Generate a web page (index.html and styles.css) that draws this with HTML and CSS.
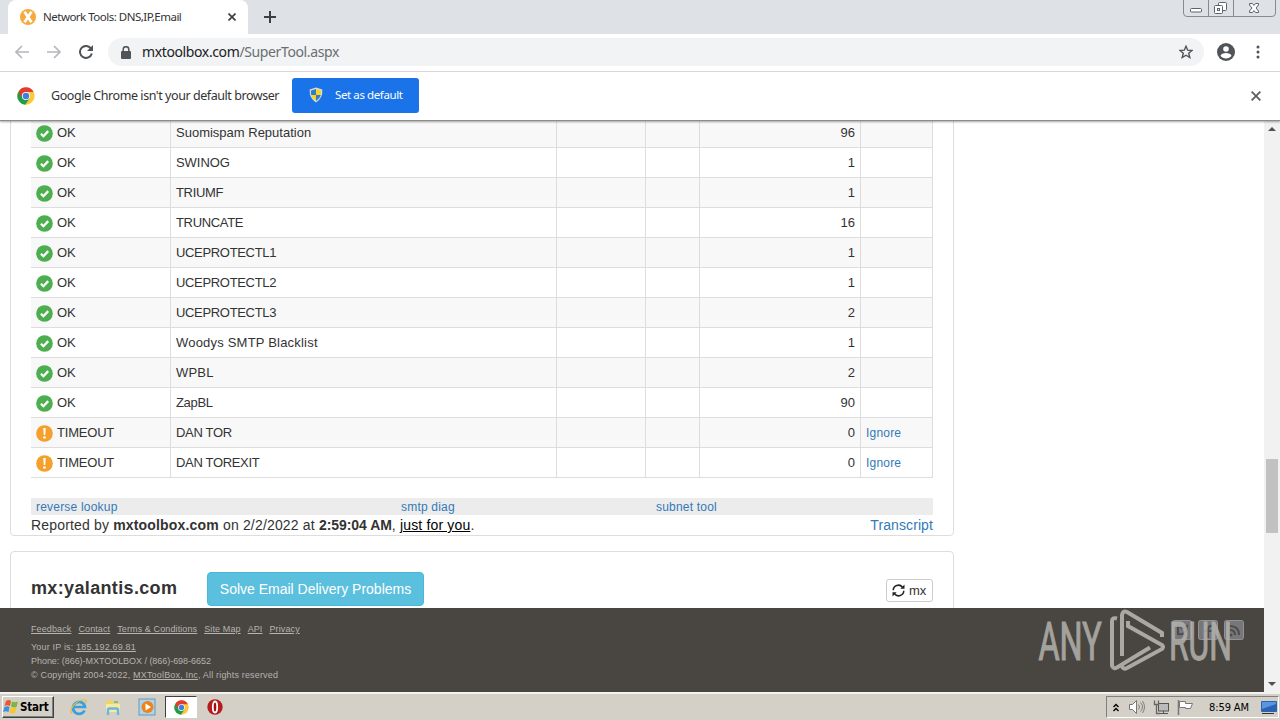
FILE: index.html
```html
<!DOCTYPE html>
<html lang="en">
<head>
<meta charset="utf-8">
<title>Network Tools: DNS,IP,Email</title>
<link rel="stylesheet" href="styles.css">
</head>

<body>

<!-- shared icons -->
<svg width="0" height="0" class="defs">
<symbol id="ok" viewBox="0 0 18 18"><circle cx="9" cy="9" r="8.8" fill="#4cae4f"/><path d="M5.2 9.2l2.7 2.7 5-5.4" fill="none" stroke="#fff" stroke-width="2.4"/></symbol>
<symbol id="warn" viewBox="0 0 18 18"><circle cx="9" cy="9" r="8.8" fill="#f5a02c"/><path d="M7.7 3.3h2.6l-.5 7.4H8.2z" fill="#fff"/><circle cx="9" cy="13.2" r="1.4" fill="#fff"/></symbol>
<symbol id="chrome" viewBox="0 0 24 24">
<circle cx="12" cy="12" r="11.5" fill="#fcc934"/>
<path d="M12 12L2 6.200A11.500 11.500 0 0 0 11 23.500L17 15z" fill="#1e9e4a"/>
<path d="M2 6.200A11.500 11.500 0 0 1 22.200 6.700H12L7 14.500z" fill="#e33b2e"/>
<circle cx="12" cy="12" r="5.400" fill="#fff"/><circle cx="12" cy="12" r="4.300" fill="#3f7fe0"/></symbol>
</svg>

<div class="tabstrip">
<div class="tab">
<svg width="16" height="16" viewBox="0 0 16 16"><circle cx="8" cy="8" r="8" fill="#f7a93b"/><path d="M4.500 2.800l7 10.400M11.500 2.800l-7 10.400" fill="none" stroke="#fff" stroke-width="2.800"/></svg>
<span class="tab-title">Network Tools: DNS,IP,Email</span>
<svg width="8" height="8" viewBox="0 0 8 8"><path d="M.5.5l7 7M7.5.5l-7 7" stroke="#3c4043" stroke-width="1.7"/></svg>
</div>
<svg class="plus" width="12" height="12" viewBox="0 0 12 12"><path d="M6 0v12M0 6h12" stroke="#3c4043" stroke-width="2"/></svg>
<svg class="winbuttons" width="94" height="18" viewBox="0 0 94 18">
<path d="M.5 0v13q0 3.5 3.5 3.5h85q3.5 0 3.5-3.5V0M25.5 0v16M50.500 0v16" fill="none" stroke="#858a96"/>
<g fill="#fff" stroke="#5c6370"><rect x="7.500" y="8.500" width="11" height="3.500" rx="1"/>
<rect x="35.500" y="2.500" width="8" height="8" rx="1"/><rect x="31.500" y="5.500" width="8" height="8" rx="1"/><rect x="34.500" y="8.500" width="2" height="2"/>
<path d="M66.500 3.500h3l1.500 2 1.500-2h3v1.500l-2.500 3 2.500 3v1.500h-3l-1.500-2-1.500 2h-3V11l2.500-3-2.500-3z"/></g>
</svg>
</div>

<div class="toolbar">
<svg width="14" height="14" viewBox="0 0 14 14"><path d="M14 7H1.500M7 1L1 7l6 6" fill="none" stroke="#b4b7bb" stroke-width="1.700"/></svg>
<svg width="14" height="14" viewBox="0 0 14 14"><path d="M0 7h12.500M7 1l6 6-6 6" fill="none" stroke="#b4b7bb" stroke-width="1.700"/></svg>
<svg width="14" height="14" viewBox="0 0 14 14"><path d="M12 3.600A6 6 0 1 0 12.800 8.500" fill="none" stroke="#4f5357" stroke-width="2"/><path d="M14 0v6H8z" fill="#4f5357"/></svg>
<div class="omnibox">
<svg width="10" height="13" viewBox="0 0 10 13"><rect y="5" width="10" height="8" rx="1" fill="#505458"/><path d="M2.200 5.500V3.500a2.800 2.800 0 0 1 5.600 0v2" fill="none" stroke="#505458" stroke-width="1.500"/></svg>
<span class="url">mxtoolbox.com<span class="path">/SuperTool.aspx</span></span>
<svg width="14" height="14" viewBox="0 0 14 14"><path d="M7 1.200l1.700 4 4.300.3-3.300 2.800 1.100 4.200L7 10.200l-3.800 2.300 1.100-4.200L1 5.500l4.300-.3z" fill="none" stroke="#505458" stroke-width="1.400"/></svg>
</div>
<svg class="avatar" width="18" height="18" viewBox="0 0 18 18"><circle cx="9" cy="9" r="9" fill="#505357"/><circle cx="9" cy="6" r="2.800" fill="#fff"/><path d="M3.500 12.800c1-3.600 10-3.600 11 0-2.300 3.600-8.700 3.600-11 0z" fill="#fff"/></svg>
<svg width="4" height="14" viewBox="0 0 4 14"><g fill="#505357"><circle cx="2" cy="2" r="1.500"/><circle cx="2" cy="7" r="1.500"/><circle cx="2" cy="12" r="1.500"/></g></svg>
</div>

<div class="infobar">
<svg width="18" height="18"><use href="#chrome"/></svg>
<span class="info-text">Google Chrome isn't your default browser</span>
<div class="btn-default">
<svg width="14" height="16" viewBox="0 0 14 16"><path d="M7 .5L13.300 2.500Q14 11 7 15.500 0 11 .7 2.500z" fill="#d8dde2"/><path d="M7 2v6H2.200Q1.800 6 2 3.500z" fill="#3779c8"/><path d="M7 2v6h4.800q.4-2 .2-4.500z" fill="#f6d51f"/><path d="M7 8v6Q3 11.500 2.200 8z" fill="#f6d51f"/><path d="M7 8v6q4-2.500 4.800-6z" fill="#3779c8"/></svg>
<span>Set as default</span>
</div>
<svg class="info-close" width="10" height="10" viewBox="0 0 10 10"><path d="M.6.6l8.800 8.800M9.400.6L.6 9.400" stroke="#5f6368" stroke-width="1.900"/></svg>
</div>

<div class="viewport">
<div class="page">
<div class="content">

<div class="panel results">
<table>
<colgroup><col class="c1"><col class="c2"><col class="c3"><col class="c4"><col class="c5"><col class="c6"></colgroup>
<tr><td><svg class="ic"><use href="#ok"/></svg>OK</td><td><span class="w1">Suomispam Reputation</span></td><td></td><td></td><td>96</td><td></td></tr>
<tr><td><svg class="ic"><use href="#ok"/></svg>OK</td><td><span class="w3">SWINOG</span></td><td></td><td></td><td>1</td><td></td></tr>
<tr><td><svg class="ic"><use href="#ok"/></svg>OK</td><td>TRIUMF</td><td></td><td></td><td>1</td><td></td></tr>
<tr><td><svg class="ic"><use href="#ok"/></svg>OK</td><td>TRUNCATE</td><td></td><td></td><td>16</td><td></td></tr>
<tr><td><svg class="ic"><use href="#ok"/></svg>OK</td><td>UCEPROTECTL1</td><td></td><td></td><td>1</td><td></td></tr>
<tr><td><svg class="ic"><use href="#ok"/></svg>OK</td><td>UCEPROTECTL2</td><td></td><td></td><td>1</td><td></td></tr>
<tr><td><svg class="ic"><use href="#ok"/></svg>OK</td><td>UCEPROTECTL3</td><td></td><td></td><td>2</td><td></td></tr>
<tr><td><svg class="ic"><use href="#ok"/></svg>OK</td><td><span class="w2">Woodys SMTP Blacklist</span></td><td></td><td></td><td>1</td><td></td></tr>
<tr><td><svg class="ic"><use href="#ok"/></svg>OK</td><td><span class="w2">WPBL</span></td><td></td><td></td><td>2</td><td></td></tr>
<tr><td><svg class="ic"><use href="#ok"/></svg>OK</td><td>ZapBL</td><td></td><td></td><td>90</td><td></td></tr>
<tr><td><svg class="ic"><use href="#warn"/></svg>TIMEOUT</td><td>DAN TOR</td><td></td><td></td><td>0</td><td><a>Ignore</a></td></tr>
<tr><td><svg class="ic"><use href="#warn"/></svg>TIMEOUT</td><td>DAN TOREXIT</td><td></td><td></td><td>0</td><td><a>Ignore</a></td></tr>
</table>
<div class="tools"><a>reverse lookup</a><a>smtp diag</a><a>subnet tool</a></div>
<div class="report">
<span>Reported by <b>mxtoolbox.com</b> on 2/2/2022 at <b class="time">2:59:04 AM</b>, <u>just for you</u>.</span>
<a>Transcript</a>
</div>
</div>

<div class="panel next">
<h2>mx:yalantis.com</h2>
<div class="btn-solve">Solve Email Delivery Problems</div>
<div class="btn-mx">
<svg width="13" height="13" viewBox="0 0 13 13"><path d="M1.200 6.200A5.200 5.200 0 0 1 10.500 3.200M11.800 6.800A5.200 5.200 0 0 1 2.500 9.800" fill="none" stroke="#222" stroke-width="1.500"/><path d="M12.500.5v4.200H8.300zM.5 12.500V8.300h4.200z" fill="#222"/></svg>
mx</div>
</div>

</div>

<div class="footer">
<div class="links"><u>Feedback</u><u>Contact</u><u>Terms &amp; Conditions</u><u>Site Map</u><u>API</u><u>Privacy</u></div>
<div>Your IP is: <u>185.192.69.81</u></div>
<div class="phone">Phone: (866)-MXTOOLBOX / (866)-698-6652</div>
<div>© Copyright 2004-2022, <u>MXToolBox, Inc</u>, All rights reserved</div>
<svg class="logo" width="234" height="84" viewBox="0 0 234 84">
<g fill="#77777b" stroke="#929296"><rect x="142.500" y="12.500" width="19" height="19" rx="2"/><rect x="168.500" y="12.500" width="19" height="19" rx="2"/><rect x="194.500" y="12.500" width="19" height="19" rx="2"/></g>
<g fill="none" stroke="#4e4c4a" stroke-width="2"><path d="M148 26q8 2 9-8l-5 2-4-3v6z"/><path d="M178 30v-8q0-5 5-4M174 23h8"/><path d="M200 18q9 0 9 9M200 22q5 0 5 5"/></g><circle cx="201" cy="27" r="1.500" fill="#4e4c4a"/>
<g class="brand"><text transform="translate(8.500 51.500) scale(.61 1)">ANY</text><text transform="translate(139 51.500) scale(.6 1)">RUN</text></g>
<path d="M87 10.500q-5-1.500-5 3v44q1 4 5 2l33-20M92 48V7q1-5 5-3l35 21v4M98 13v5l34 19q2 2 0 4L97 60q-4 2-5-2" fill="none" stroke="#b4b3ae" stroke-opacity=".9" stroke-width="4"/>
</svg>
</div>
</div>

<div class="scrollbar">
<svg width="8" height="4" viewBox="0 0 8 4"><path d="M0 4l4-4 4 4z" fill="#505050"/></svg>
<div class="thumb"></div>
<svg class="down" width="8" height="4" viewBox="0 0 8 4"><path d="M0 0l4 4 4-4z" fill="#505050"/></svg>
</div>
</div>

<div class="taskbar">
<div class="start">
<svg width="16" height="16" viewBox="0 0 16 16"><path d="M3 2q3-2 5 0L7 7q-3-1.500-5.500 0z" fill="#e8592b"/><path d="M9 2.500q3 1.500 6 0L13.500 8Q11 9 8 7.500z" fill="#7db73c"/><path d="M1.500 8q3-1.500 5 0L5.500 13q-3-1.500-5.500 0z" fill="#3c8fd8"/><path d="M7.500 8.500q3 1.500 6 0L12 14q-3 1-5.500-.5z" fill="#f8c52c"/></svg>
Start</div>
<div class="task">
<svg width="18" height="18" viewBox="0 0 18 18"><path d="M14.500 12.500A6 6 0 1 1 15 9H4" fill="none" stroke="#3aa0dc" stroke-width="2.700"/><path d="M2 15.500Q-1 12 5 6T16 2.500q1 1-.5 3" fill="none" stroke="#e7b93c" stroke-width="1.200"/></svg>
</div>
<div class="task">
<svg width="18" height="18" viewBox="0 0 18 18"><path d="M2 4l1-2h5l1 1h6v11H2z" fill="#efd36c"/><path d="M2 6h14v8H2z" fill="#f8e9a0"/><path d="M4 17v-5q0-1.500 1.500-1.500h7Q14 10.500 14 12v5" fill="none" stroke="#6db7df" stroke-width="2.500"/><path d="M10 4h4" stroke="#5babcf" stroke-width="1.500"/></svg>
</div>
<div class="task">
<svg width="18" height="18" viewBox="0 0 18 18"><rect x="1" y="1" width="16" height="16" fill="#acd4ee" stroke="#6499be"/><circle cx="9.500" cy="9" r="6" fill="#ef8218"/><path d="M7.500 5.500l5.500 3.500-5.500 3.500z" fill="#fff"/></svg>
</div>
<div class="task active"><svg width="15" height="15"><use href="#chrome"/></svg></div>
<div class="task">
<svg width="16" height="16" viewBox="0 0 16 16"><circle cx="8" cy="8" r="7.700" fill="#b71c1c"/><ellipse cx="8" cy="8" rx="2.200" ry="5.500" fill="#a00f14" stroke="#fff" stroke-width="1.800"/></svg>
</div>
<div class="tray">
<svg class="up" width="6" height="9" viewBox="0 0 6 9"><path d="M.5 4L3 1.500 5.500 4M.5 8L3 5.500 5.500 8" fill="none" stroke="#000" stroke-width="1.400"/></svg>
<svg width="16" height="14" viewBox="0 0 16 14"><path d="M.5 4.500h3l4-4v13l-4-4h-3z" fill="#fff" stroke="#777"/><path d="M9.500 4.500q2 2.500 0 5M11.500 2.500q4 4.500 0 9M13.500 1q4 6 0 12" fill="none" stroke="#808080"/></svg>
<svg width="16" height="15" viewBox="0 0 16 15"><rect x="5.500" y="3.500" width="10" height="7.500" fill="#bbb" stroke="#555"/><path d="M7 13.500h8M10.500 11v2" stroke="#555"/><path d="M1.500.5v4h4v-4M3.500 4.500v9H7" fill="none" stroke="#666" stroke-width="1.300"/></svg>
<svg width="17" height="15" viewBox="0 0 17 15"><path d="M1.500 0v15" stroke="#777" stroke-width="1.500"/><path d="M2.500 1.500h6v2h7l-2 5H8.500v-1h-6z" fill="#fff" stroke="#777"/></svg>
<span class="clock">8:59 AM</span>
<svg width="16" height="13" viewBox="0 0 16 13"><rect width="16" height="11" rx="1" fill="#2b62b4"/><path d="M1 1h14v2L1 8z" fill="#5897df"/><path d="M1 12.500h12" stroke="#333"/></svg>
</div>
</div>

</body>
</html>
```
FILE: styles.css
```css
* {
	box-sizing: border-box;
}

body {
	margin: 0;
	width: 1280px;
	height: 720px;
	overflow: hidden;
	display: flex;
	flex-direction: column;
	font-family: "Liberation Sans", Arial, sans-serif;
	color: #333;
	background: #fff;
}

svg {
	display: block;
	flex: none;
}

.defs {
	position: absolute;
}

a {
	color: #337ab7;
}

/* browser window */
.tabstrip {
	height: 34px;
	flex: none;
	display: flex;
	background: #dee1e6;
	font-family: "Noto Sans", sans-serif;
}

.tab {
	width: 240px;
	height: 34px;
	margin-left: 8px;
	padding: 0 11px 0 12px;
	display: flex;
	align-items: center;
	background: #fff;
	border-radius: 8px 8px 0 0;
}

.tab-title {
	width: 185px;
	margin-left: 7px;
	margin-top: -2px;
	font-size: 11.5px;
	letter-spacing: -0.5px;
	white-space: nowrap;
}

.plus {
	margin: 11px 0 0 16px;
}

.winbuttons {
	margin-left: auto;
	margin-right: 3px;
}

.toolbar {
	height: 38px;
	flex: none;
	display: flex;
	align-items: center;
	gap: 18px;
	padding: 0 0 1px 15px;
	border-bottom: 1px solid #dadce0;
}

.omnibox {
	width: 1096px;
	height: 28px;
	margin-left: -3px;
	padding: 0 11px 0 13px;
	display: flex;
	align-items: center;
	border-radius: 14px;
	background: #f1f3f4;
	font-family: "Noto Sans", sans-serif;
	font-size: 14px;
}

.url {
	margin-left: 11px;
	margin-right: auto;
	margin-top: -2px;
	color: #202124;
	letter-spacing: -0.38px;
}

.path {
	color: #6a6e73;
}

.avatar {
	margin: 0 6px 0 -5px;
}

.avatar + svg {
	margin-left: -3px;
}

.infobar {
	height: 49px;
	flex: none;
	display: flex;
	align-items: center;
	padding: 0 19px 1px 17px;
	border-bottom: 1px solid #8c8c8c;
	box-shadow: 0 1px 2px rgba(0, 0, 0, 0.35);
	position: relative;
	z-index: 1;
	background: #fff;
	font-family: "Noto Sans", sans-serif;
}

.info-text {
	width: 241px;
	margin-left: 16px;
	font-size: 12.5px;
	letter-spacing: -0.44px;
	white-space: nowrap;
}

.btn-default {
	width: 127px;
	height: 35px;
	padding: 0 0 2px 17px;
	display: flex;
	align-items: center;
	gap: 12px;
	border-radius: 3px;
	background: #1a73e8;
	color: #fff;
	font-size: 11.5px;
	letter-spacing: -0.4px;
	white-space: nowrap;
}

.info-close {
	margin-left: auto;
}

.viewport {
	height: 571px;
	flex: none;
	display: flex;
}

.page {
	width: 1264px;
}

.content {
	height: 487px;
	overflow: hidden;
	padding-left: 10px;
}

/* result panels */
.panel {
	width: 944px;
	border: 1px solid #ddd;
	border-radius: 4px;
	padding: 0 20px;
}

.results {
	height: 419px;
	margin-top: -4px;
}

table {
	width: 902px;
	table-layout: fixed;
	border-collapse: separate;
	border-spacing: 0;
}

.c1 { width: 140px; }
.c2 { width: 386px; }
.c3 { width: 89px; }
.c4 { width: 54px; }
.c5 { width: 161px; }
.c6 { width: 72px; }

td {
	height: 30px;
	padding: 0 5px;
	border-right: 1px solid #ddd;
	border-bottom: 1px solid #ddd;
	font-size: 13px;
	line-height: 29px;
	letter-spacing: -0.33px;
	white-space: nowrap;
}

tr:nth-child(odd) {
	background: #f8f8f8;
}

td:nth-child(1) {
	letter-spacing: -0.2px;
}

td:nth-child(5) {
	text-align: right;
	letter-spacing: 0;
}

td a {
	display: block;
	padding-top: 2px;
	font-size: 12px;
	line-height: 27px;
	letter-spacing: 0.2px;
}

.w1 {
	letter-spacing: 0;
}

.w2 {
	letter-spacing: 0.2px;
}

.w3 {
	letter-spacing: -0.05px;
}

.ic {
	width: 17px;
	height: 17px;
	margin: 7px 4px 0 0;
	float: left;
}

.tools {
	height: 17px;
	margin-top: 20px;
	padding-left: 5px;
	display: grid;
	grid-template-columns: 365px 255px 1fr;
	background: #ececec;
	font-size: 12px;
	line-height: 18px;
	letter-spacing: 0.2px;
}

.report {
	display: flex;
	justify-content: space-between;
	font-size: 14px;
	line-height: 20px;
	letter-spacing: 0.17px;
	white-space: nowrap;
}

.report .time {
	letter-spacing: -0.05px;
}

.report a {
	letter-spacing: 0.1px;
}

.report u {
	color: #000;
}

.next {
	height: 120px;
	margin-top: 15px;
	display: flex;
	padding-top: 20px;
}

h2 {
	width: 176px;
	margin: 0;
	font-size: 18px;
	line-height: 32px;
	letter-spacing: 0.35px;
}

.btn-solve {
	width: 217px;
	height: 34px;
	border: 1px solid #46b8da;
	border-radius: 4px;
	background: #5bc0de;
	color: #fff;
	font-size: 14px;
	line-height: 33px;
	text-align: center;
}

.btn-mx {
	width: 47px;
	height: 23px;
	margin: 7px 0 0 auto;
	padding-left: 5px;
	display: flex;
	align-items: center;
	gap: 4px;
	border: 1px solid #ccc;
	border-radius: 3px;
	font-size: 13px;
}

.footer {
	height: 84px;
	padding: 14px 0 0 31px;
	position: relative;
	background: #494540;
	color: #b5b3b0;
	font-size: 9px;
	line-height: 14px;
	letter-spacing: 0.17px;
}

.links {
	display: flex;
	gap: 7px;
	margin-bottom: 4px;
	letter-spacing: 0.11px;
}

.phone {
	letter-spacing: -0.04px;
}

/* sits over the social buttons */
.logo {
	position: absolute;
	left: 1030px;
	top: 0;
}

.brand {
	fill: #b4b3ae;
	stroke: #b4b3ae;
	stroke-width: 1.2px;
	opacity: 0.85;
	font-family: Roboto, sans-serif;
	font-size: 53px;
	letter-spacing: 0;
}

.scrollbar {
	width: 16px;
	display: flex;
	flex-direction: column;
	align-items: center;
	padding: 6px 0;
	background: #f1f1f1;
}

.thumb {
	width: 12px;
	height: 74px;
	margin-top: 328px;
	background: #c1c1c1;
}

.down {
	margin-top: auto;
}

/* desktop */
.taskbar {
	height: 28px;
	flex: none;
	display: flex;
	padding-top: 2px;
	border-top: 2px solid #f4f2ee;
	background: #d4d0c8;
	font-family: "DejaVu Sans Condensed", sans-serif;
}

.start {
	width: 52px;
	height: 22px;
	margin: 0 9px 0 2px;
	display: flex;
	align-items: center;
	gap: 1px;
	border: 1px solid #fff;
	border-right-color: #404040;
	border-bottom-color: #404040;
	box-shadow: inset -1px -1px #808080;
	font-size: 11.5px;
	font-weight: bold;
	letter-spacing: -0.2px;
	color: #000;
}

.task {
	width: 32px;
	height: 22px;
	margin-right: 2px;
	display: flex;
	align-items: center;
	justify-content: center;
}

.active {
	background: #fff;
	border: 1px solid #404040;
	border-right-color: #fff;
	border-bottom-color: #fff;
}

.tray {
	width: 173px;
	height: 22px;
	margin: 0 1px 0 auto;
	padding-left: 6px;
	display: flex;
	align-items: center;
	gap: 8px;
	border: 1px solid #808080;
	border-right-color: #fff;
	border-bottom-color: #fff;
}

.up {
	margin-right: 2px;
}

.clock {
	width: 44px;
	margin-left: 7px;
	font-size: 11px;
	letter-spacing: -0.1px;
	white-space: nowrap;
	color: #000;
}
```
